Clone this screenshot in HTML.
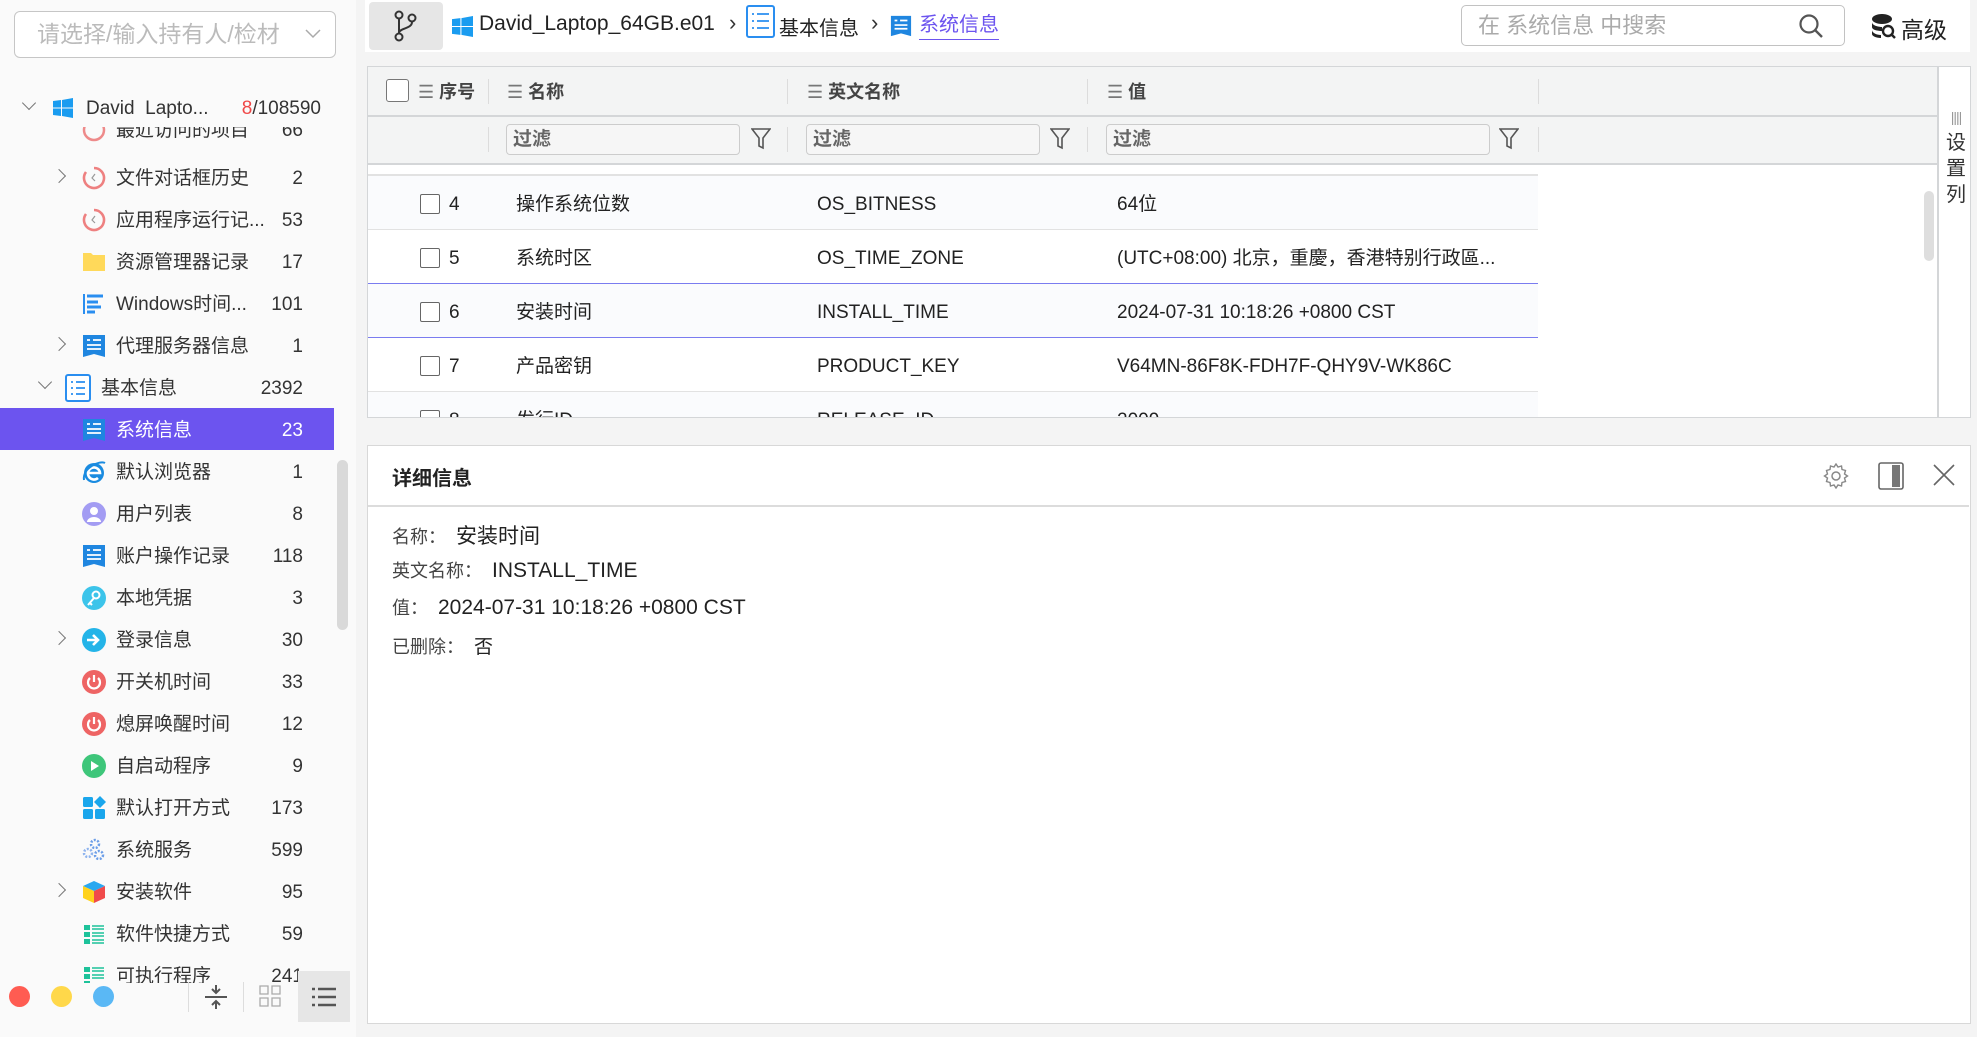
<!DOCTYPE html>
<html><head><meta charset="utf-8">
<style>
*{margin:0;padding:0;box-sizing:border-box}
body{width:1977px;height:1037px;overflow:hidden;background:#f4f4f4;font-family:"Liberation Sans","Noto Sans CJK SC",sans-serif;color:#222;position:relative}
.a{position:absolute}
#side{left:0;top:0;width:356px;height:1037px;background:#fafafa}
.sel{left:14px;top:11px;width:322px;height:47px;border:1.5px solid #c6c6c6;border-radius:6px;background:#fff;color:#bbb;font-size:23px;line-height:44px;padding-left:22px;white-space:nowrap;overflow:hidden}
.row{left:0;width:334px;height:42px;font-size:19px;line-height:42px;color:#333;white-space:nowrap}
.row .t{position:absolute;left:116px;top:2px}
.row .c{position:absolute;right:31px;top:2px}
.row .i{position:absolute;left:82px;top:10px;width:24px;height:24px}
.chev{position:absolute;top:15px;width:10px;height:10px;border-right:1.5px solid #777;border-bottom:1.5px solid #777}
.cr{left:54px;transform:rotate(-45deg)}
.cd{transform:rotate(45deg);top:11px}
.hl{background:#6c54ef;color:#fff}
#top{left:365px;top:0;width:1605px;height:52px;background:#fff}
#tbl{left:367px;top:66px;width:1604px;height:352px;background:#fff;border:1.5px solid #d4d6d8;overflow:hidden}
.hd{position:absolute;left:0;top:0;width:1570px;height:97px;background:#f3f4f4}
.ht{position:absolute;top:0;height:50px;line-height:50px;font-size:18px;font-weight:bold;color:#444}
.vs{position:absolute;width:1px;background:#dcdcdc}
.fi{position:absolute;top:57px;height:31px;border:1.5px solid #ccc;border-radius:4px;background:#f6f6f6;font-size:19px;font-weight:bold;color:#666;line-height:30px;padding-left:6px}
.tr{position:absolute;left:0;width:1170px;height:54px;border-bottom:1.5px solid #e2e2e2;font-size:19px;line-height:58px;color:#222;white-space:nowrap}
.cb{position:absolute;left:52px;top:18px;width:20px;height:20px;border:1.5px solid #666;border-radius:2px;background:#fff}
#det{left:367px;top:445px;width:1604px;height:579px;background:#fff;border:1.5px solid #d8d8d8}
.lb{position:absolute;left:24px;font-size:18px;color:#444;white-space:nowrap}
.lb b{font-weight:normal;color:#222;font-size:21px;margin-left:10px}
</style></head><body>

<div id="side" class="a">
 <div class="a sel">请选择/输入持有人/检材<svg class="a" style="right:14px;top:17px" width="16" height="10" viewBox="0 0 16 10"><path d="M1 1l7 7 7-7" fill="none" stroke="#aaa" stroke-width="1.5"/></svg></div>

 <div class="a" style="left:0;top:127px;width:334px;height:20px;overflow:hidden">
  <div class="a row" style="top:-19px">
   <svg class="i" viewBox="0 0 24 24"><circle cx="12" cy="12" r="10" fill="none" stroke="#ee8a8a" stroke-width="2.5"/></svg>
   <span class="t">最近访问的项目</span><span class="c">66</span></div>
 </div>
 <div class="a row" style="top:87px">
  <span class="chev cd" style="left:24px"></span>
  <svg class="a" style="left:53px;top:11px" width="20" height="20" viewBox="0 0 20 20"><path d="M0 3l8-1v7.5H0zM9 2l11-2v9.5H9zM0 10.5h8V18l-8-1zM9 10.5h11V20L9 18z" fill="#1a9cf0"/></svg>
  <span class="a" style="left:86px;top:1px">David&nbsp; Lapto...</span>
  <span class="a" style="right:13px;top:1px"><span style="color:#f04848">8</span>/108590</span>
 </div>
 <div class="a row" style="top:156px"><span class="chev cr"></span>
  <svg class="i" viewBox="0 0 24 24"><path d="M4 6A10 10 0 1 0 12 2" fill="none" stroke="#ee8080" stroke-width="2.6"/><path d="M13 8l-3 4 3 3" fill="none" stroke="#999" stroke-width="1.2"/></svg>
  <span class="t">文件对话框历史</span><span class="c">2</span></div>
 <div class="a row" style="top:198px">
  <svg class="i" viewBox="0 0 24 24"><path d="M4 6A10 10 0 1 0 12 2" fill="none" stroke="#ee8080" stroke-width="2.6"/><path d="M13 8l-3 4 3 3" fill="none" stroke="#999" stroke-width="1.2"/></svg>
  <span class="t">应用程序运行记...</span><span class="c">53</span></div>
 <div class="a row" style="top:240px">
  <svg class="i" viewBox="0 0 24 24"><path d="M1 3h8l2 2h12v16H1z" fill="#ffd95a"/></svg>
  <span class="t">资源管理器记录</span><span class="c">17</span></div>
 <div class="a row" style="top:282px">
  <svg class="i" viewBox="0 0 24 24"><path d="M2 2v20" stroke="#2a8ef0" stroke-width="2"/><path d="M5 4h16M5 10h11M5 15h14M5 20h8" stroke="#2a8ef0" stroke-width="3"/></svg>
  <span class="t">Windows时间...</span><span class="c">101</span></div>
 <div class="a row" style="top:324px"><span class="chev cr"></span>
  <svg class="i" viewBox="0 0 24 24"><path d="M1 1h22v22l-11-3-11 3z" fill="#1f86e0"/><path d="M5 6h3M11 6h8M5 11h14M5 15h14" stroke="#fff" stroke-width="1.8"/></svg>
  <span class="t">代理服务器信息</span><span class="c">1</span></div>
 <div class="a row" style="top:366px"><span class="chev cd" style="left:40px"></span>
  <svg class="a" style="left:65px;top:8px" width="26" height="28" viewBox="0 0 26 28"><rect x="1" y="1" width="24" height="26" rx="2" fill="#fff" stroke="#2a8ef0" stroke-width="2"/><path d="M6 8h2M11 8h9M6 14h2M11 14h9M6 20h2M11 20h9" stroke="#2a8ef0" stroke-width="1.8"/></svg>
  <span class="a" style="left:101px;top:2px">基本信息</span><span class="c">2392</span></div>
 <div class="a row hl" style="top:408px">
  <svg class="i" viewBox="0 0 24 24"><path d="M1 1h22v22l-11-3-11 3z" fill="#1f86e0"/><path d="M5 6h3M11 6h8M5 11h14M5 15h14" stroke="#fff" stroke-width="1.8"/></svg>
  <span class="t">系统信息</span><span class="c">23</span></div>
 <div class="a row" style="top:450px">
  <svg class="i" viewBox="0 0 24 24"><circle cx="12" cy="13" r="10" fill="#1a8be0"/><path d="M6 13h12a6 6 0 1 0-2 5" fill="none" stroke="#fff" stroke-width="2.6"/><path d="M2 20C0 8 18 0 23 3" fill="none" stroke="#1a8be0" stroke-width="2"/></svg>
  <span class="t">默认浏览器</span><span class="c">1</span></div>
 <div class="a row" style="top:492px">
  <svg class="i" viewBox="0 0 24 24"><circle cx="12" cy="12" r="12" fill="#a39cf3"/><circle cx="12" cy="9" r="4" fill="#fff"/><path d="M5 20a7 5 0 0 1 14 0" fill="#fff"/></svg>
  <span class="t">用户列表</span><span class="c">8</span></div>
 <div class="a row" style="top:534px">
  <svg class="i" viewBox="0 0 24 24"><path d="M1 1h22v22l-11-3-11 3z" fill="#1f86e0"/><path d="M5 6h3M11 6h8M5 11h14M5 15h14" stroke="#fff" stroke-width="1.8"/></svg>
  <span class="t">账户操作记录</span><span class="c">118</span></div>
 <div class="a row" style="top:576px">
  <svg class="i" viewBox="0 0 24 24"><circle cx="12" cy="12" r="12" fill="#3cc4ea"/><circle cx="14" cy="9" r="3.5" fill="none" stroke="#fff" stroke-width="2"/><path d="M12 12l-6 7M8 17l2 2" stroke="#fff" stroke-width="2"/></svg>
  <span class="t">本地凭据</span><span class="c">3</span></div>
 <div class="a row" style="top:618px"><span class="chev cr"></span>
  <svg class="i" viewBox="0 0 24 24"><circle cx="12" cy="12" r="12" fill="#24b4e8"/><path d="M5 12h10M11 7l5 5-5 5" fill="none" stroke="#fff" stroke-width="2.6"/></svg>
  <span class="t">登录信息</span><span class="c">30</span></div>
 <div class="a row" style="top:660px">
  <svg class="i" viewBox="0 0 24 24"><circle cx="12" cy="12" r="12" fill="#ee6464"/><path d="M8 8a6 6 0 1 0 8 0M12 5v7" fill="none" stroke="#fff" stroke-width="2.2"/></svg>
  <span class="t">开关机时间</span><span class="c">33</span></div>
 <div class="a row" style="top:702px">
  <svg class="i" viewBox="0 0 24 24"><circle cx="12" cy="12" r="12" fill="#ee6464"/><path d="M8 8a6 6 0 1 0 8 0M12 5v7" fill="none" stroke="#fff" stroke-width="2.2"/></svg>
  <span class="t">熄屏唤醒时间</span><span class="c">12</span></div>
 <div class="a row" style="top:744px">
  <svg class="i" viewBox="0 0 24 24"><circle cx="12" cy="12" r="12" fill="#3ec67a"/><path d="M9 7l8 5-8 5z" fill="#fff"/></svg>
  <span class="t">自启动程序</span><span class="c">9</span></div>
 <div class="a row" style="top:786px">
  <svg class="i" viewBox="0 0 24 24"><rect x="1" y="1" width="10" height="10" rx="1.5" fill="#1aa6ec"/><rect x="13" y="13" width="10" height="10" rx="1.5" fill="#1aa6ec"/><rect x="1" y="13" width="10" height="10" rx="1.5" fill="#1aa6ec"/><path d="M18 0l6 6-6 6-6-6z" fill="#1aa6ec"/></svg>
  <span class="t">默认打开方式</span><span class="c">173</span></div>
 <div class="a row" style="top:828px">
  <svg class="i" viewBox="0 0 24 24"><circle cx="13" cy="6" r="4" fill="none" stroke="#6c9ee8" stroke-width="2.5" stroke-dasharray="2 1.5"/><circle cx="6" cy="15" r="4" fill="none" stroke="#8fb4ee" stroke-width="2.5" stroke-dasharray="2 1.5"/><circle cx="17" cy="17" r="4" fill="none" stroke="#6c9ee8" stroke-width="2.5" stroke-dasharray="2 1.5"/></svg>
  <span class="t">系统服务</span><span class="c">599</span></div>
 <div class="a row" style="top:870px"><span class="chev cr"></span>
  <svg class="i" viewBox="0 0 24 24"><path d="M12 1l11 5-11 5L1 6z" fill="#2aa8f0"/><path d="M1 6l11 5v12L1 18z" fill="#ffd21c"/><path d="M23 6l-11 5v12l11-5z" fill="#f04b4b"/></svg>
  <span class="t">安装软件</span><span class="c">95</span></div>
 <div class="a row" style="top:912px">
  <svg class="i" viewBox="0 0 24 24"><path d="M2 3h6v5H2zM2 10h6v5H2zM2 17h6v5H2z" fill="#1dc29a"/><path d="M10 4h12M10 7h12M10 11h12M10 14h12M10 18h12M10 21h12" stroke="#1dc29a" stroke-width="1.6"/></svg>
  <span class="t">软件快捷方式</span><span class="c">59</span></div>
 <div class="a" style="left:0;top:954px;width:334px;height:29px;overflow:hidden">
  <div class="a row" style="top:0">
   <svg class="i" viewBox="0 0 24 24"><path d="M2 3h6v5H2zM2 10h6v5H2zM2 17h6v5H2z" fill="#1dc29a"/><path d="M10 4h12M10 7h12M10 11h12M10 14h12" stroke="#1dc29a" stroke-width="1.6"/></svg>
   <span class="t">可执行程序</span><span class="c">241</span></div>
 </div>
 <div class="a" style="left:337px;top:460px;width:11px;height:170px;border-radius:6px;background:#d9d9d9"></div>

 <div class="a" style="left:0;top:968px;width:350px;height:52px">
  <div class="a" style="left:9px;top:18px;width:21px;height:21px;border-radius:50%;background:#ff5c52"></div>
  <div class="a" style="left:51px;top:18px;width:21px;height:21px;border-radius:50%;background:#ffd84a"></div>
  <div class="a" style="left:93px;top:18px;width:21px;height:21px;border-radius:50%;background:#5ab8f5"></div>
  <div class="a" style="left:188px;top:14px;width:1px;height:30px;background:#ddd"></div>
  <svg class="a" style="left:205px;top:16px" width="22" height="26" viewBox="0 0 22 26"><path d="M0 13h22M11 1v8M7 5l4 4 4-4M11 25v-8M7 21l4-4 4 4" fill="none" stroke="#555" stroke-width="2"/></svg>
  <div class="a" style="left:243px;top:14px;width:1px;height:30px;background:#ddd"></div>
  <svg class="a" style="left:259px;top:17px" width="22" height="22" viewBox="0 0 22 22"><path d="M1 1h8v8H1zM13 1h8v8h-8zM1 13h8v8H1zM13 13h8v8h-8z" fill="none" stroke="#aaa" stroke-width="1.3"/></svg>
  <div class="a" style="left:298px;top:3px;width:52px;height:51px;background:#e6e6e6"></div>
  <svg class="a" style="left:312px;top:19px" width="24" height="20" viewBox="0 0 24 20"><path d="M0 2h3M6 2h18M0 10h3M6 10h18M0 18h3M6 18h18" stroke="#555" stroke-width="2.6"/></svg>
 </div>
</div>

<div id="top" class="a">
 <div class="a" style="left:4px;top:2px;width:74px;height:48px;background:#e6e6e6;border-radius:4px"></div>
 <svg class="a" style="left:28px;top:10px" width="24" height="32" viewBox="0 0 24 32"><circle cx="6" cy="5" r="3.5" fill="none" stroke="#333" stroke-width="2"/><circle cx="6" cy="27" r="3.5" fill="none" stroke="#333" stroke-width="2"/><circle cx="19" cy="8" r="3.5" fill="none" stroke="#333" stroke-width="2"/><path d="M6 9v14M19 12c0 7-13 6-13 11" fill="none" stroke="#333" stroke-width="2"/></svg>
 <svg class="a" style="left:87px;top:16px" width="21" height="21" viewBox="0 0 20 20"><path d="M0 3l8-1v7.5H0zM9 2l11-2v9.5H9zM0 10.5h8V18l-8-1zM9 10.5h11V20L9 18z" fill="#1a9cf0"/></svg>
 <span class="a" style="left:114px;top:12px;font-size:21px;color:#222">David_Laptop_64GB.e01</span>
 <span class="a" style="left:364px;top:10px;font-size:22px;color:#333">›</span>
 <svg class="a" style="left:381px;top:5px" width="29" height="33" viewBox="0 0 29 33"><rect x="1" y="1" width="27" height="31" rx="2" fill="#fff" stroke="#2a8ef0" stroke-width="2"/><path d="M6 9h2M11 9h12M6 16h2M11 16h12M6 23h2M11 23h12" stroke="#2a8ef0" stroke-width="1.8"/></svg>
 <span class="a" style="left:414px;top:12px;font-size:20px;color:#222">基本信息</span>
 <span class="a" style="left:506px;top:10px;font-size:22px;color:#333">›</span>
 <svg class="a" style="left:525px;top:14px" width="22" height="24" viewBox="0 0 24 24"><path d="M1 1h22v22l-11-3-11 3z" fill="#1f86e0"/><path d="M5 6h3M11 6h8M5 11h14M5 15h14" stroke="#fff" stroke-width="1.8"/></svg>
 <span class="a" style="left:554px;top:11px;font-size:20px;color:#6c54ef;border-bottom:1.5px solid #6c54ef;line-height:28px">系统信息</span>
 <div class="a" style="left:1096px;top:5px;width:384px;height:41px;border:1.5px solid #c2c2c2;border-radius:5px;background:#fff;color:#aaa;font-size:22px;line-height:40px;padding-left:16px">在 系统信息 中搜索
  <svg class="a" style="right:20px;top:7px" width="26" height="26" viewBox="0 0 26 26"><circle cx="11" cy="11" r="8.5" fill="none" stroke="#555" stroke-width="2.2"/><path d="M17 17l7 7" stroke="#555" stroke-width="2.4"/></svg></div>
 <svg class="a" style="left:1506px;top:13px" width="26" height="27" viewBox="0 0 26 27"><ellipse cx="11" cy="6" rx="10" ry="5" fill="#222"/><path d="M1 9c0 4 8 5 10 5v4c-4 0-10-1-10-4zM1 17c0 3 5 5 9 5v3c-5 0-9-2-9-4z" fill="#222"/><circle cx="17" cy="18" r="5" fill="none" stroke="#222" stroke-width="2.4"/><path d="M20 21l4 4" stroke="#222" stroke-width="2.4"/></svg>
 <span class="a" style="left:1536px;top:11px;font-size:23px;color:#222">高级</span>
</div>

<div id="tbl" class="a">
 <div class="hd"></div>
 <div class="a" style="left:0;top:48px;width:1570px;height:1.5px;background:#d4d6d8"></div>
 <div class="a" style="left:0;top:96px;width:1570px;height:1.5px;background:#d4d6d8"></div>
 <div class="a" style="left:18px;top:12px;width:23px;height:23px;border:1.5px solid #777;border-radius:3px;background:#fff"></div>
 <div class="ht" style="left:50px"><span style="font-weight:normal;color:#777">☰</span> 序号</div>
 <div class="vs" style="left:120px;top:12px;height:25px"></div>
 <div class="ht" style="left:139px"><span style="font-weight:normal;color:#777">☰</span> 名称</div>
 <div class="vs" style="left:419px;top:12px;height:25px"></div>
 <div class="ht" style="left:439px"><span style="font-weight:normal;color:#777">☰</span> 英文名称</div>
 <div class="vs" style="left:719px;top:12px;height:25px"></div>
 <div class="ht" style="left:739px"><span style="font-weight:normal;color:#777">☰</span> 值</div>
 <div class="vs" style="left:1170px;top:12px;height:25px"></div>
 <div class="vs" style="left:120px;top:60px;height:25px"></div>
 <div class="fi" style="left:138px;width:234px">过滤</div>
 <svg class="a" style="left:383px;top:60px" width="20" height="24" viewBox="0 0 20 24"><path d="M1 2h18l-7 9v10l-4-2v-8z" fill="none" stroke="#555" stroke-width="1.6"/></svg>
 <div class="vs" style="left:419px;top:60px;height:25px"></div>
 <div class="fi" style="left:438px;width:234px">过滤</div>
 <svg class="a" style="left:682px;top:60px" width="20" height="24" viewBox="0 0 20 24"><path d="M1 2h18l-7 9v10l-4-2v-8z" fill="none" stroke="#555" stroke-width="1.6"/></svg>
 <div class="vs" style="left:719px;top:60px;height:25px"></div>
 <div class="fi" style="left:738px;width:384px">过滤</div>
 <svg class="a" style="left:1131px;top:60px" width="20" height="24" viewBox="0 0 20 24"><path d="M1 2h18l-7 9v10l-4-2v-8z" fill="none" stroke="#555" stroke-width="1.6"/></svg>
 <div class="vs" style="left:1170px;top:60px;height:25px"></div>

 <div class="a" style="left:0;top:107px;width:1170px;height:1.5px;background:#e2e2e2"></div>
 <div class="tr" style="top:109px;background:#fafbfd"><div class="cb"></div><span class="a" style="left:81px">4</span><span class="a" style="left:148px">操作系统位数</span><span class="a" style="left:449px">OS_BITNESS</span><span class="a" style="left:749px">64位</span></div>
 <div class="tr" style="top:163px;border-bottom:1.5px solid #7a7cf0"><div class="cb"></div><span class="a" style="left:81px">5</span><span class="a" style="left:148px">系统时区</span><span class="a" style="left:449px">OS_TIME_ZONE</span><span class="a" style="left:749px">(UTC+08:00) 北京，重慶，香港特别行政區...</span></div>
 <div class="tr" style="top:217px;background:#fafbfd;border-bottom:1.5px solid #7a7cf0"><div class="cb"></div><span class="a" style="left:81px">6</span><span class="a" style="left:148px">安装时间</span><span class="a" style="left:449px">INSTALL_TIME</span><span class="a" style="left:749px">2024-07-31 10:18:26 +0800 CST</span></div>
 <div class="tr" style="top:271px"><div class="cb"></div><span class="a" style="left:81px">7</span><span class="a" style="left:148px">产品密钥</span><span class="a" style="left:449px">PRODUCT_KEY</span><span class="a" style="left:749px">V64MN-86F8K-FDH7F-QHY9V-WK86C</span></div>
 <div class="tr" style="top:325px;background:#fafbfd"><div class="cb"></div><span class="a" style="left:81px">8</span><span class="a" style="left:148px">发行ID</span><span class="a" style="left:449px">RELEASE_ID</span><span class="a" style="left:749px">2009</span></div>

 <div class="a" style="left:1556px;top:124px;width:10px;height:70px;border-radius:5px;background:#dedede"></div>
 <div class="a" style="left:1569px;top:0;width:1.5px;height:352px;background:#d4d6d8"></div>
 <div class="a" style="left:1571px;top:0;width:33px;height:352px;background:#fff"></div>
 <div class="a" style="left:1577px;top:36px;font-size:20px;line-height:26px;color:#333;text-align:center;width:22px"><span style="color:#999;font-size:14px;letter-spacing:-1px">||||</span><br>设<br>置<br>列</div>
</div>

<div id="det" class="a">
 <div class="a" style="left:24px;top:16px;font-size:20px;font-weight:bold;color:#222">详细信息</div>
 <svg class="a" style="left:1455px;top:17px" width="26" height="26" viewBox="0 0 26 26"><circle cx="13" cy="13" r="4" fill="none" stroke="#888" stroke-width="1.5"/><path d="M13 1l2 3 3.5-1 .5 3.5 3.5 1-1 3.5 3 2-3 2 1 3.5-3.5 1-.5 3.5-3.5-1-2 3-2-3-3.5 1-.5-3.5-3.5-1 1-3.5-3-2 3-2-1-3.5 3.5-1 .5-3.5 3.5 1z" fill="none" stroke="#888" stroke-width="1.4"/></svg>
 <svg class="a" style="left:1510px;top:16px" width="26" height="28" viewBox="0 0 26 28"><rect x="1" y="1" width="24" height="26" rx="2" fill="none" stroke="#666" stroke-width="1.6"/><rect x="14" y="3" width="8" height="22" fill="#777"/></svg>
 <svg class="a" style="left:1565px;top:18px" width="22" height="22" viewBox="0 0 22 22"><path d="M1 1l20 20M21 1L1 21" stroke="#666" stroke-width="1.6"/></svg>
 <div class="a" style="left:0;top:59px;width:1601px;height:1.5px;background:#dcdcdc"></div>
 <div class="lb" style="top:74px">名称：<b>安装时间</b></div>
 <div class="lb" style="top:111px">英文名称：<b>INSTALL_TIME</b></div>
 <div class="lb" style="top:148px">值：<b>2024-07-31 10:18:26 +0800 CST</b></div>
 <div class="lb" style="top:186px">已删除：<b style="font-size:19px">否</b></div>
</div>
</body></html>
